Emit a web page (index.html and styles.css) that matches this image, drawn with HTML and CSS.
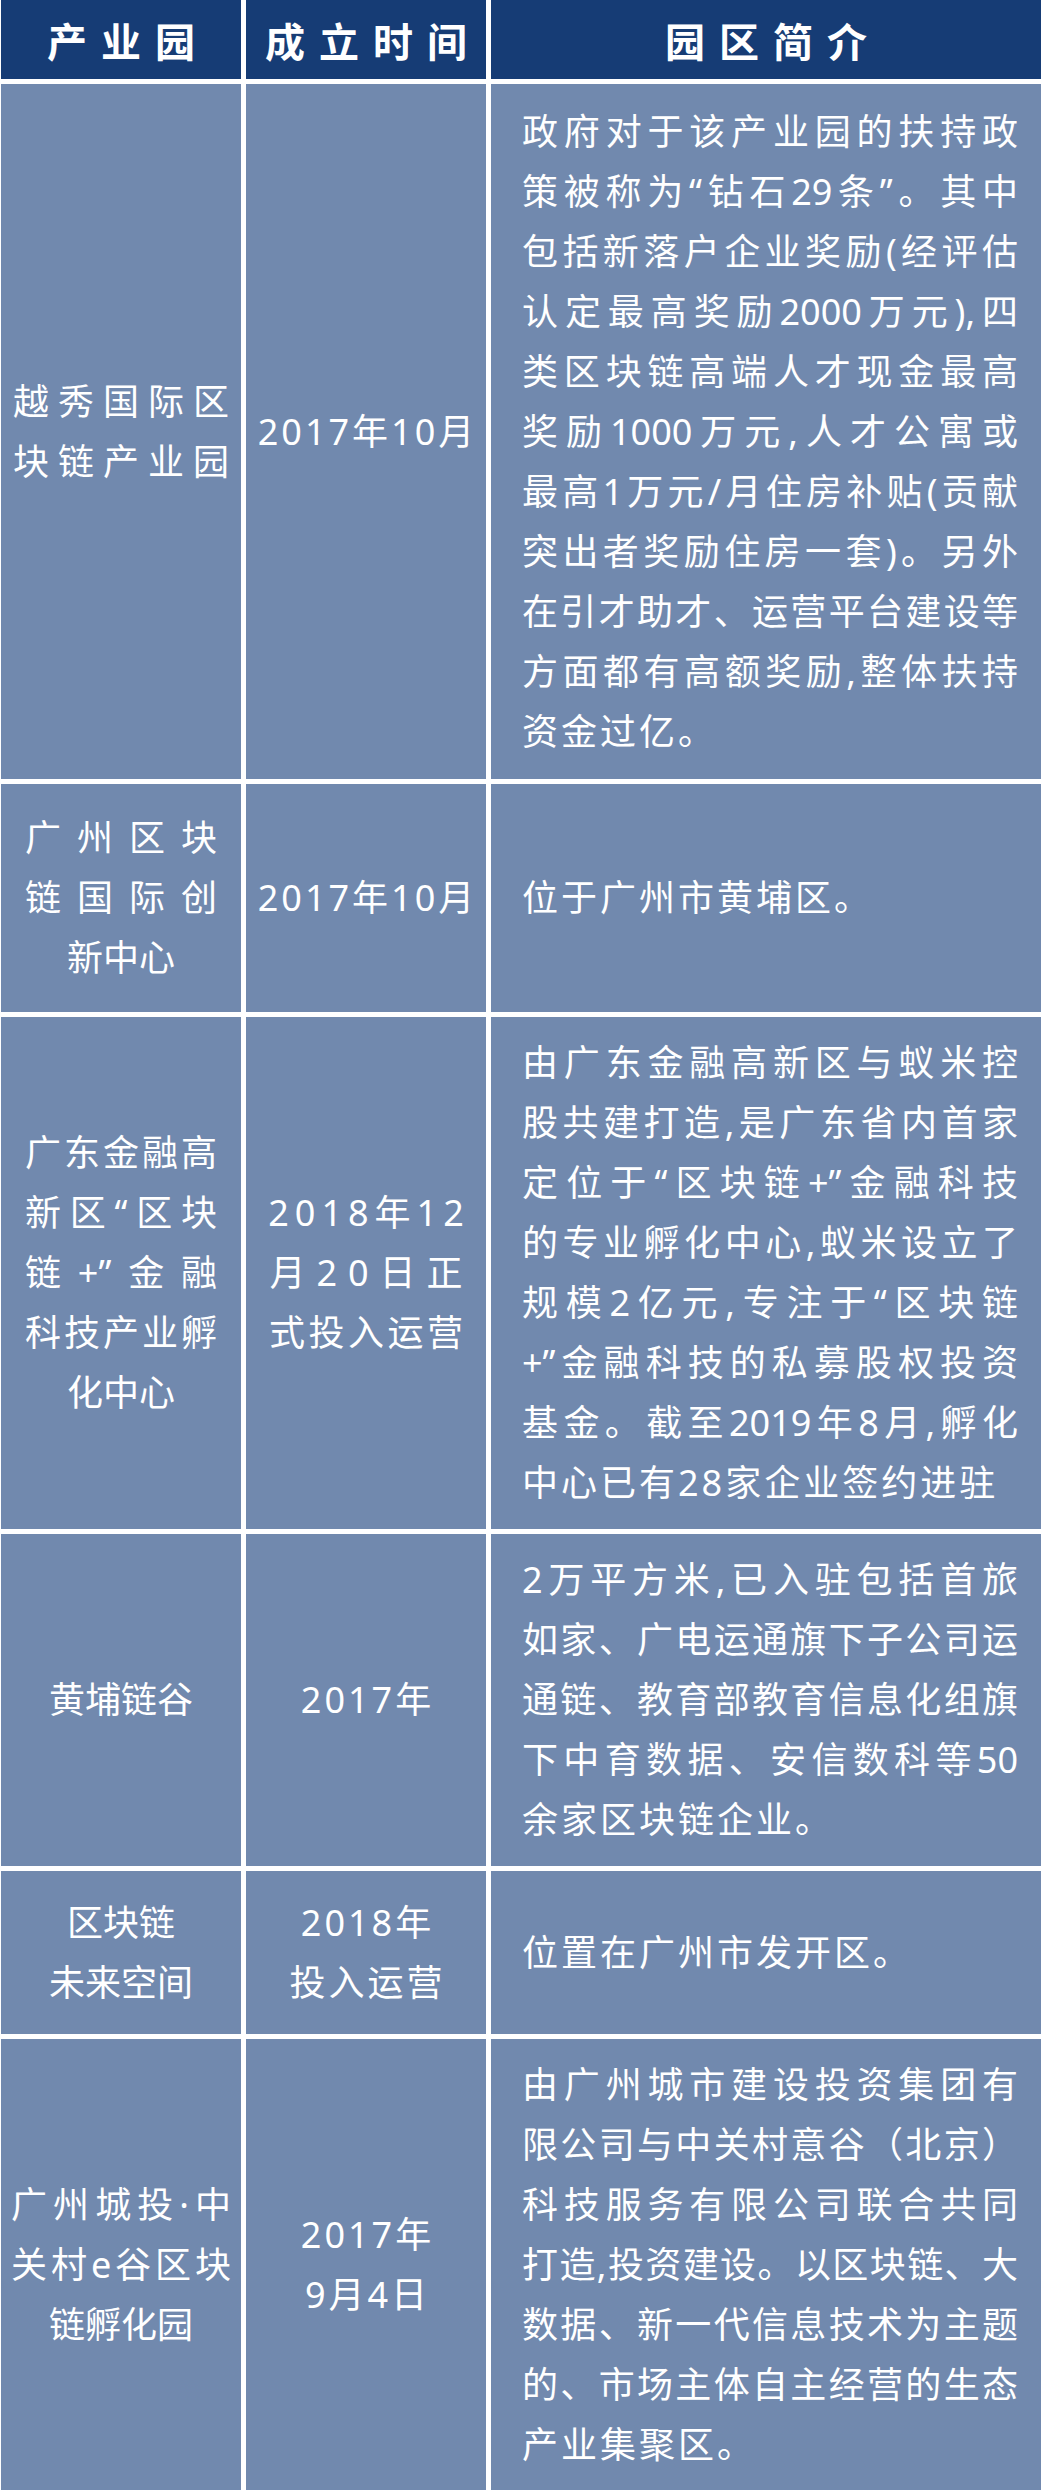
FILE: index.html
```html
<!DOCTYPE html>
<html lang="zh-CN">
<head>
<meta charset="utf-8">
<title>产业园</title>
<link rel="stylesheet" href="styles.css">
</head>
<body>
<div class="table">
  <div class="cell head"><span class="ht">产业园</span></div>
  <div class="cell head"><span class="ht">成立时间</span></div>
  <div class="cell head"><span class="ht">园区简介</span></div>

  <div class="cell"><div class="txt name j all">
    <span class="ln">越秀国际区</span><span class="ln">块链产业园</span>
  </div></div>
  <div class="cell"><div class="txt date"><span class="ln">2017年10月</span></div></div>
  <div class="cell desc-cell"><div class="txt desc">
    <span class="ln">政府对于该产业园的扶持政</span>
    <span class="ln">策被称为“钻石29条”。其中</span>
    <span class="ln">包括新落户企业奖励(经评估</span>
    <span class="ln">认定最高奖励2000万元),四</span>
    <span class="ln">类区块链高端人才现金最高</span>
    <span class="ln">奖励1000万元,人才公寓或</span>
    <span class="ln">最高1万元/月住房补贴(贡献</span>
    <span class="ln">突出者奖励住房一套)。另外</span>
    <span class="ln">在引才助才、运营平台建设等</span>
    <span class="ln">方面都有高额奖励,整体扶持</span>
    <span class="ln end">资金过亿。</span>
  </div></div>

  <div class="cell"><div class="txt name j">
    <span class="ln">广州区块</span><span class="ln">链国际创</span><span class="ln end">新中心</span>
  </div></div>
  <div class="cell"><div class="txt date"><span class="ln">2017年10月</span></div></div>
  <div class="cell desc-cell"><div class="txt desc">
    <span class="ln end">位于广州市黄埔区。</span>
  </div></div>

  <div class="cell"><div class="txt name j">
    <span class="ln">广东金融高</span><span class="ln">新区“区块</span><span class="ln">链+”金融</span><span class="ln">科技产业孵</span><span class="ln end">化中心</span>
  </div></div>
  <div class="cell"><div class="txt date spread">
    <span class="ln sp-a">2018年12</span><span class="ln sp-b">月20日正</span><span class="ln sp-c">式投入运营</span>
  </div></div>
  <div class="cell desc-cell"><div class="txt desc">
    <span class="ln">由广东金融高新区与蚁米控</span>
    <span class="ln">股共建打造,是广东省内首家</span>
    <span class="ln">定位于“区块链+”金融科技</span>
    <span class="ln">的专业孵化中心,蚁米设立了</span>
    <span class="ln">规模2亿元,专注于“区块链</span>
    <span class="ln">+”金融科技的私募股权投资</span>
    <span class="ln">基金。截至2019年8月,孵化</span>
    <span class="ln end">中心已有28家企业签约进驻</span>
  </div></div>

  <div class="cell"><div class="txt name"><span class="ln">黄埔链谷</span></div></div>
  <div class="cell"><div class="txt date"><span class="ln">2017年</span></div></div>
  <div class="cell desc-cell"><div class="txt desc">
    <span class="ln">2万平方米,已入驻包括首旅</span>
    <span class="ln">如家、广电运通旗下子公司运</span>
    <span class="ln">通链、教育部教育信息化组旗</span>
    <span class="ln">下中育数据、安信数科等50</span>
    <span class="ln end">余家区块链企业。</span>
  </div></div>

  <div class="cell"><div class="txt name">
    <span class="ln">区块链</span><span class="ln">未来空间</span>
  </div></div>
  <div class="cell"><div class="txt date">
    <span class="ln">2018年</span><span class="ln">投入运营</span>
  </div></div>
  <div class="cell desc-cell"><div class="txt desc">
    <span class="ln end">位置在广州市发开区。</span>
  </div></div>

  <div class="cell"><div class="txt name j wide">
    <span class="ln">广州城投·中</span><span class="ln">关村e谷区块</span><span class="ln end">链孵化园</span>
  </div></div>
  <div class="cell"><div class="txt date">
    <span class="ln">2017年</span><span class="ln">9月4日</span>
  </div></div>
  <div class="cell desc-cell"><div class="txt desc">
    <span class="ln">由广州城市建设投资集团有</span>
    <span class="ln">限公司与中关村意谷（北京）</span>
    <span class="ln">科技服务有限公司联合共同</span>
    <span class="ln">打造,投资建设。以区块链、大</span>
    <span class="ln">数据、新一代信息技术为主题</span>
    <span class="ln">的、市场主体自主经营的生态</span>
    <span class="ln end">产业集聚区。</span>
  </div></div>
</div>
</body>
</html>
```

FILE: styles.css
```css
html, body {
  margin: 0;
  padding: 0;
  background: #ffffff;
}

body {
  font-family: "Noto Sans", "Noto Sans CJK SC", sans-serif;
  color: #ffffff;
}

.table {
  display: grid;
  grid-template-columns: 240px 240px 550px;
  grid-template-rows: 79px 695px 228px 512px 332px 163px 451px;
  column-gap: 5px;
  row-gap: 5px;
  width: 1040px;
  margin-left: 1px;
}

.cell {
  background: #7189ae;
  display: flex;
  align-items: center;
  justify-content: center;
}

.head {
  background: #163c75;
}

.ht {
  font-family: "Noto Sans CJK SC", sans-serif;
  font-size: 40px;
  font-weight: 700;
  letter-spacing: 14px;
  margin-right: -14px;
  line-height: 1;
}

.txt {
  font-size: 36px;
  line-height: 60px;
}

.ln {
  display: block;
  white-space: nowrap;
}

.name, .date {
  text-align: center;
}

.name {
  width: 192px;
}

.name.all {
  width: 216px;
}

.name.wide {
  width: 220px;
}

.date {
  width: 232px;
  letter-spacing: 3px;
  text-indent: 3px;
}

.date.spread {
  text-indent: 0;
}

.date .sp-a {
  letter-spacing: 6px;
  text-indent: 6px;
}

.date .sp-b {
  letter-spacing: 11px;
  text-indent: 11px;
}

.date .sp-c {
  letter-spacing: 3.5px;
  text-indent: 3.5px;
}

.j .ln {
  text-align: justify;
  text-align-last: justify;
}

.j .ln.end {
  text-align-last: center;
}

.desc-cell {
  justify-content: flex-start;
  padding-left: 31px;
}

.desc {
  width: 496px;
}

.desc .ln {
  text-align: justify;
  text-align-last: justify;
}

.desc .ln.end {
  text-align-last: left;
  letter-spacing: 3px;
}
```
